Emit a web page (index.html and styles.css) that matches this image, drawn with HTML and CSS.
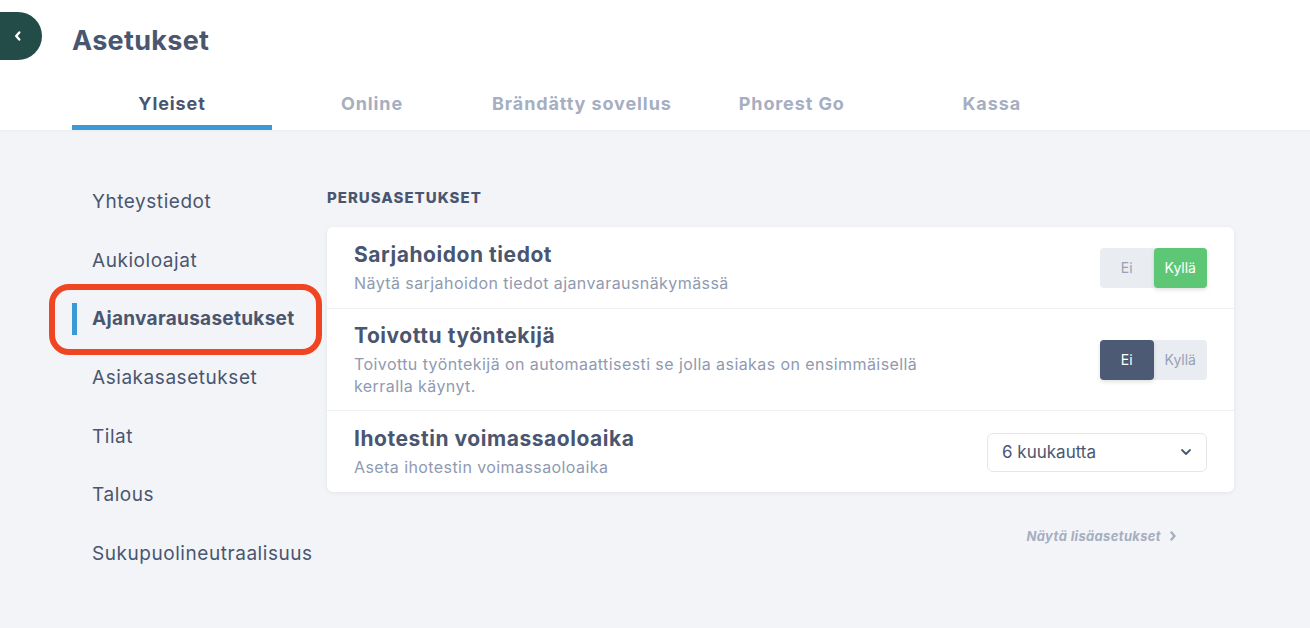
FILE: index.html
```html
<!DOCTYPE html>
<html lang="fi">
<head>
<meta charset="utf-8">
<title>Asetukset</title>
<link rel="stylesheet" href="styles.css">
</head>
<body>
<header class="header">
  <div class="top">
    <button class="back" aria-label="Takaisin">
      <svg width="10" height="12" viewBox="0 0 10 12"><path d="M6.3 2.5 L3.2 6 L6.3 9.5" fill="none" stroke="#fff" stroke-width="2.4" stroke-linecap="round" stroke-linejoin="round"/></svg>
    </button>
    <h1 class="title">Asetukset</h1>
  </div>
  <nav class="tabs">
    <a class="tab active">Yleiset</a>
    <a class="tab">Online</a>
    <a class="tab">Brändätty sovellus</a>
    <a class="tab">Phorest Go</a>
    <a class="tab">Kassa</a>
  </nav>
</header>
<main class="main">
  <aside class="side">
    <a class="side-item">Yhteystiedot</a>
    <a class="side-item">Aukioloajat</a>
    <a class="side-item active">Ajanvarausasetukset</a>
    <a class="side-item">Asiakasasetukset</a>
    <a class="side-item">Tilat</a>
    <a class="side-item">Talous</a>
    <a class="side-item">Sukupuolineutraalisuus</a>
  </aside>
  <section class="content">
    <h2 class="section-title">PERUSASETUKSET</h2>
    <div class="card">
      <div class="row">
        <div class="text">
          <div class="row-title">Sarjahoidon tiedot</div>
          <div class="row-sub">Näytä sarjahoidon tiedot ajanvarausnäkymässä</div>
        </div>
        <div class="toggle">
          <span class="opt">Ei</span>
          <span class="opt on-yes">Kyllä</span>
        </div>
      </div>
      <div class="row row-tall">
        <div class="text">
          <div class="row-title">Toivottu työntekijä</div>
          <div class="row-sub">Toivottu työntekijä on automaattisesti se jolla asiakas on ensimmäisellä kerralla käynyt.</div>
        </div>
        <div class="toggle">
          <span class="opt on-no">Ei</span>
          <span class="opt">Kyllä</span>
        </div>
      </div>
      <div class="row">
        <div class="text">
          <div class="row-title">Ihotestin voimassaoloaika</div>
          <div class="row-sub">Aseta ihotestin voimassaoloaika</div>
        </div>
        <div class="select">
          <span>6 kuukautta</span>
          <svg width="12" height="8" viewBox="0 0 12 8"><path d="M2 2 L6 6 L10 2" fill="none" stroke="#4a5670" stroke-width="1.8" stroke-linecap="round" stroke-linejoin="round"/></svg>
        </div>
      </div>
    </div>
    <div class="more-wrap">
      <a class="more">Näytä lisäasetukset
        <svg width="8" height="10" viewBox="0 0 8 10"><path d="M2.5 1.5 L5.5 5 L2.5 8.5" fill="none" stroke="#a6aec1" stroke-width="2.4" stroke-linecap="round" stroke-linejoin="round"/></svg>
      </a>
    </div>
  </section>
</main>
</body>
</html>
```
FILE: styles.css
```css
* { box-sizing: border-box; }
html, body { margin: 0; padding: 0; }
body {
  font-family: Inter, "Noto Sans", sans-serif;
  background: #f3f4f7;
  color: #4a5670;
  width: 1310px;
  height: 628px;
  overflow: hidden;
}
.header {
  background: #fff;
  height: 130px;
  display: flex;
  flex-direction: column;
  box-shadow: 0 1px 3px rgba(0,0,0,0.04);
}
.top {
  display: flex;
  align-items: flex-start;
  height: 80px;
}
.back {
  margin-top: 12px;
  width: 42px;
  height: 48px;
  border: none;
  background: #234c49;
  border-radius: 0 24px 24px 0;
  display: flex;
  align-items: center;
  justify-content: center;
  padding: 0 6px 0 0;
}
.title {
  margin: 25px 0 0 30px;
  font-size: 27px;
  line-height: 32px;
  font-weight: 700;
  color: #4a5670;
  letter-spacing: 0.3px;
}
.tabs {
  display: flex;
  margin-left: 72px;
  height: 50px;
}
.tab {
  min-width: 200px;
  padding: 0 20px;
  text-align: center;
  font-size: 18px;
  font-weight: 700;
  line-height: 48px;
  color: #a6aec1;
  border-bottom: 5px solid transparent;
  letter-spacing: 0.9px;
}
.tab.active {
  color: #4a5670;
  border-bottom-color: #3b9ad4;
}
.main {
  display: flex;
  padding-left: 72px;
}
.side {
  width: 255px;
  padding-top: 43px;
  display: flex;
  flex-direction: column;
}
.side-item {
  position: relative;
  height: 58.7px;
  line-height: 58.7px;
  padding-left: 20px;
  font-size: 19px;
  color: #4a5670;
  letter-spacing: 0.55px;
  white-space: nowrap;
}
.side-item.active {
  font-weight: 700;
  letter-spacing: 0.3px;
}
.side-item.active::before {
  content: "";
  position: absolute;
  left: 0;
  top: 13px;
  width: 5px;
  height: 32px;
  background: #3b9ad4;
}
.side-item.active::after {
  content: "";
  position: absolute;
  left: -23px;
  right: 5px;
  top: -6px;
  bottom: -6px;
  border: 6px solid #ef4522;
  border-radius: 20px;
}
.content {
  width: 907px;
  padding-top: 58px;
}
.section-title {
  margin: 0 0 19px 0;
  font-size: 15px;
  line-height: 20px;
  font-weight: 800;
  letter-spacing: 1px;
  color: #4a5670;
}
.card {
  background: #fff;
  border-radius: 6px;
  box-shadow: 0 1px 4px rgba(40,50,80,0.08);
}
.row {
  display: flex;
  align-items: center;
  justify-content: space-between;
  padding: 15px 27px 14px 27px;
  min-height: 81px;
  border-bottom: 1px solid #eef0f3;
}
.row.row-tall { padding: 14px 27px 13px 27px; }
.row:last-child { border-bottom: none; }
.text { max-width: 590px; }
.row-title {
  font-size: 21px;
  line-height: 26px;
  font-weight: 700;
  color: #4a5670;
  letter-spacing: 0.55px;
}
.row-sub {
  font-size: 16px;
  line-height: 22px;
  color: #8f9ab0;
  margin-top: 4px;
  letter-spacing: 0.42px;
}
.toggle {
  display: flex;
  background: #e9ecf1;
  border-radius: 4px;
  height: 40px;
}
.opt {
  width: 53.5px;
  height: 40px;
  line-height: 40px;
  text-align: center;
  font-size: 14px;
  color: #98a1b5;
  border-radius: 4px;
}
.opt.on-yes {
  background: #5ec776;
  color: #fff;
  box-shadow: 0 2px 4px rgba(0,0,0,0.12);
}
.opt.on-no {
  background: #4d5a73;
  color: #fff;
  box-shadow: 0 2px 4px rgba(0,0,0,0.12);
}
.select {
  width: 220px;
  height: 39px;
  border: 1px solid #e4e6eb;
  border-radius: 6px;
  display: flex;
  align-items: center;
  justify-content: space-between;
  padding: 0 14px 0 14px;
  font-size: 17px;
  color: #4a5670;
}
.more-wrap {
  display: flex;
  justify-content: flex-end;
  padding: 36px 57px 0 0;
}
.more {
  font-size: 13px;
  font-weight: 700;
  font-style: italic;
  color: #a6aec1;
  display: flex;
  align-items: center;
  gap: 8px;
  letter-spacing: 0.35px;
}
```
